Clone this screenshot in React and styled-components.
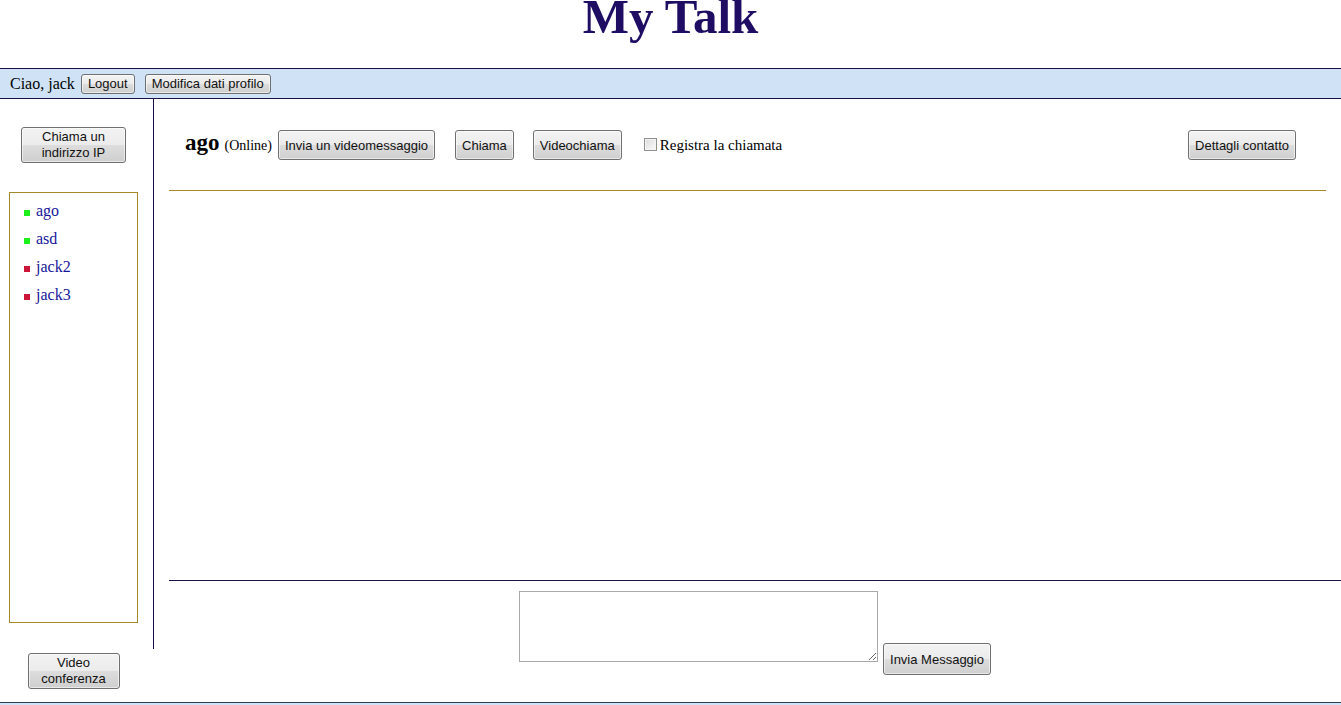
import * as React from "react";
import styled, { createGlobalStyle } from "styled-components";

const GlobalStyle = createGlobalStyle`
  html, body {
    margin: 0;
    padding: 0;
    background: #ffffff;
  }
  body {
    font-family: "Liberation Serif", "Times New Roman", serif;
    color: #000;
  }
`;

const Page = styled.div`
  height: 705px;
  overflow: hidden;
`;

const Title = styled.h1`
  margin: 0;
  height: 68px;
  line-height: 33px;
  text-align: center;
  font-size: 49px;
  font-weight: 700;
  color: #1e0d63;
`;

const UserBar = styled.div`
  height: 29px;
  border-top: 1px solid #1a1046;
  border-bottom: 1px solid #1a1046;
  background: #cfe2f6;
  display: flex;
  align-items: center;
  padding-left: 10px;
  font-size: 16px;
`;

const Greeting = styled.span`
  margin-right: 6px;
`;

const Button = styled.button`
  box-sizing: border-box;
  height: ${(p) => p.$height || 30}px;
  ${(p) => (p.$width ? `width: ${p.$width}px;` : "")}
  margin: 0;
  margin-right: ${(p) => p.$gap || 0}px;
  padding: 0 ${(p) => (p.$pad === undefined ? 6 : p.$pad)}px;
  font-family: "Liberation Sans", Arial, sans-serif;
  font-size: 13px;
  line-height: ${(p) => (p.$wrap ? "16px" : "15px")};
  white-space: ${(p) => (p.$wrap ? "normal" : "nowrap")};
  color: #111;
  border: 1px solid #707070;
  border-radius: 3px;
  background: linear-gradient(#f3f3f3 0%, #ebebeb 50%, #dddddd 50%, #cfcfcf 100%);
  box-shadow: inset 0 0 0 1px rgba(255, 255, 255, 0.55);
  cursor: pointer;
`;

const Body = styled.div`
  height: 603px;
  display: flex;
`;

const Sidebar = styled.div`
  width: 154px;
  flex-shrink: 0;
`;

const SidebarPanel = styled.div`
  box-sizing: border-box;
  height: 550px;
  border-right: 1px solid #1a1046;
  padding: 28px 0 0 9px;
`;

const Slot = styled.div`
  width: 129px;
  display: flex;
  justify-content: center;
`;

const BottomSlot = styled(Slot)`
  margin-left: 9px;
  padding-top: 4px;
`;

const ContactBox = styled.div`
  box-sizing: border-box;
  width: 129px;
  height: 431px;
  margin-top: 29px;
  border: 1px solid #a3892a;
  padding: 4px 0 0 14px;
`;

const ContactList = styled.ul`
  list-style: none;
  margin: 0;
  padding: 0;
`;

const Contact = styled.li`
  font-size: 16px;
  line-height: 28px;
  color: #16169a;
`;

const Status = styled.span`
  display: inline-block;
  width: 6px;
  height: 6px;
  margin-right: 6px;
  background: ${(p) => (p.$online ? "#1ef01e" : "#cc1538")};
`;

const Main = styled.div`
  flex: 1;
  min-width: 0;
`;

const MainTop = styled.div`
  padding: 31px 15px 0 15px;
`;

const Toolbar = styled.div`
  height: 30px;
  display: flex;
  align-items: baseline;
  padding-left: 16px;
`;

const ContactName = styled.span`
  font-size: 23px;
  line-height: 23px;
  font-weight: 700;
`;

const Presence = styled.span`
  font-size: 14px;
  margin: 0 6px 0 5px;
`;

const CheckLabel = styled.label`
  font-size: 15px;
  margin-right: auto;
`;

const Check = styled.input`
  appearance: none;
  -webkit-appearance: none;
  box-sizing: border-box;
  width: 13px;
  height: 13px;
  margin: 0 3px 0 0;
  vertical-align: -1px;
  border: 1px solid #8e8f8f;
  background: linear-gradient(135deg, #dcdcdc, #fbfbfb);
  box-shadow: inset 0 0 0 1px #f4f4f4;
`;

const Divider = styled.div`
  margin-top: 30px;
  border-top: 1px solid #a3892a;
`;

const Messages = styled.div`
  height: 389px;
`;

const Composer = styled.div`
  margin-left: 15px;
  border-top: 1px solid #1a1046;
  padding-top: 10px;
  display: flex;
  justify-content: center;
  align-items: flex-start;
  gap: 5px;
`;

const MessageInput = styled.textarea`
  box-sizing: border-box;
  width: 359px;
  height: 71px;
  margin: 0;
  border: 1px solid #a9a9a9;
  font-family: "Liberation Sans", Arial, sans-serif;
  font-size: 13px;
`;

const SendButton = styled(Button)`
  margin-top: 52px;
`;

const Footer = styled.div`
  height: 10px;
  border-top: 1px solid #2c3e5a;
  background: #cfe2f6;
`;

const contacts = [
  { name: "ago", online: true },
  { name: "asd", online: true },
  { name: "jack2", online: false },
  { name: "jack3", online: false },
];

export default function App() {
  return (
    <Page>
      <GlobalStyle />
      <Title>My Talk</Title>
      <UserBar>
        <Greeting>Ciao, jack</Greeting>
        <Button $height={20} $pad={6} $gap={10}>Logout</Button>
        <Button $height={20} $pad={6}>Modifica dati profilo</Button>
      </UserBar>
      <Body>
        <Sidebar>
          <SidebarPanel>
            <Slot>
              <Button $height={36} $width={105} $wrap>
                Chiama un indirizzo IP
              </Button>
            </Slot>
            <ContactBox>
              <ContactList>
                {contacts.map((c) => (
                  <Contact key={c.name}>
                    <Status $online={c.online} />
                    {c.name}
                  </Contact>
                ))}
              </ContactList>
            </ContactBox>
          </SidebarPanel>
          <BottomSlot>
            <Button $height={36} $width={92} $wrap>
              Video conferenza
            </Button>
          </BottomSlot>
        </Sidebar>
        <Main>
          <MainTop>
            <Toolbar>
              <ContactName>ago</ContactName>
              <Presence>(Online)</Presence>
              <Button $gap={20}>Invia un videomessaggio</Button>
              <Button $gap={19}>Chiama</Button>
              <Button $gap={22}>Videochiama</Button>
              <CheckLabel>
                <Check type="checkbox" />
                Registra la chiamata
              </CheckLabel>
              <Button $gap={30}>Dettagli contatto</Button>
            </Toolbar>
            <Divider />
          </MainTop>
          <Messages />
          <Composer>
            <MessageInput />
            <SendButton $height={32}>Invia Messaggio</SendButton>
          </Composer>
        </Main>
      </Body>
      <Footer />
    </Page>
  );
}
